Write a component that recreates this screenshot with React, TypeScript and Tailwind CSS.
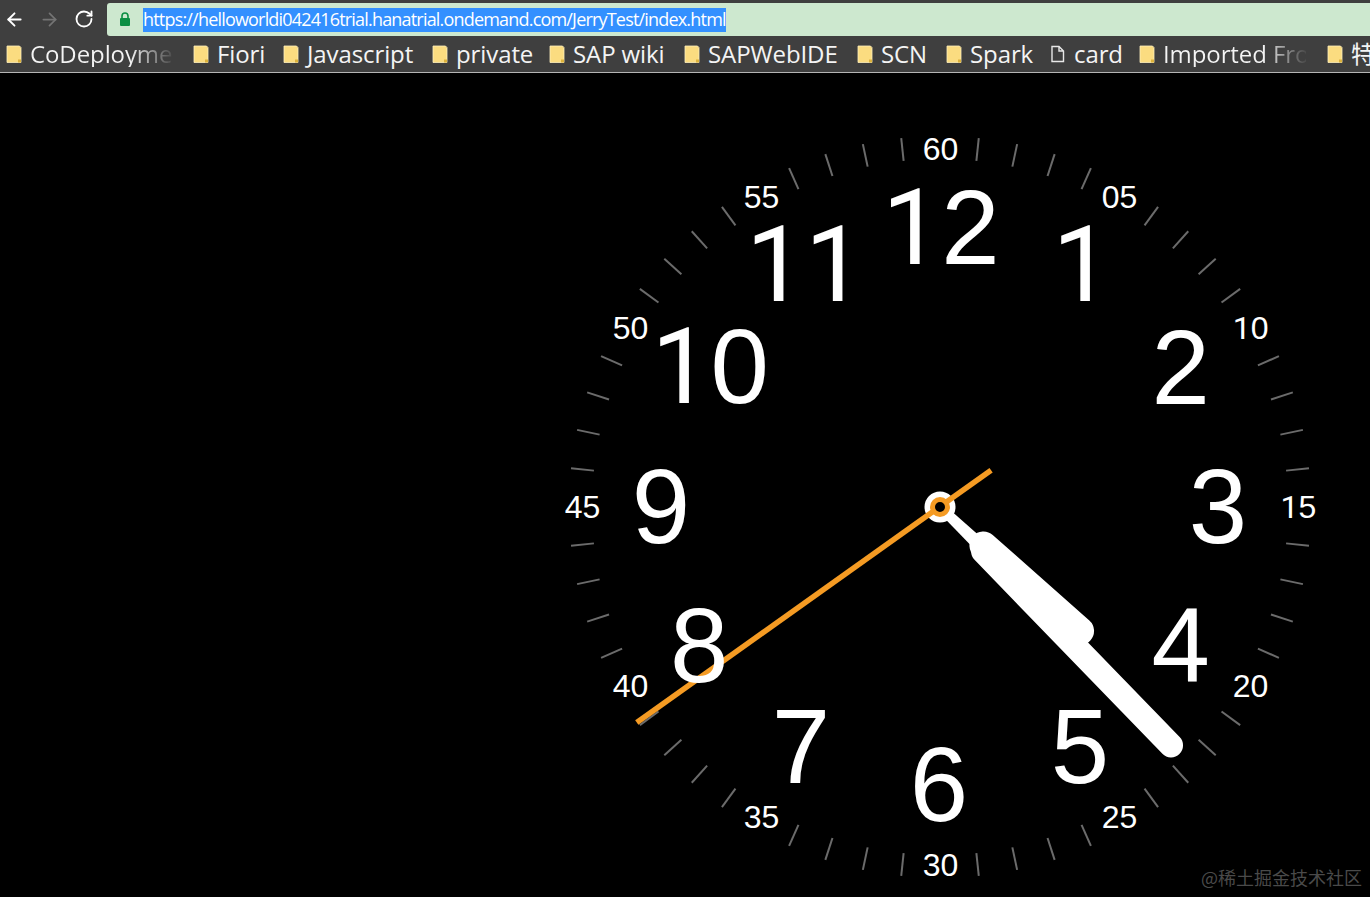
import React from 'react';
import { ArrowLeft, ArrowRight, RotateCw } from 'lucide-react';

const CX = 570 + 370;
const CY = 507 - 73;

const bookmarks = [
  { label: 'CoDeployme', width: 'w-[187px]', fade: true },
  { label: 'Fiori', width: 'w-[90px]' },
  { label: 'Javascript', width: 'w-[149px]' },
  { label: 'private', width: 'w-[117px]' },
  { label: 'SAP wiki', width: 'w-[135px]' },
  { label: 'SAPWebIDE', width: 'w-[173px]' },
  { label: 'SCN', width: 'w-[89px]' },
  { label: 'Spark', width: 'w-[104px]' },
  { label: 'card', width: 'w-[89px]', page: true },
  { label: 'Imported From', width: 'w-[188px]', fade: true },
  { label: '特', width: 'w-[40px]' },
];

const polar = (deg: number, r: number) => {
  const a = (deg * Math.PI) / 180;
  return { x: CX + r * Math.sin(a), y: CY - r * Math.cos(a) };
};

// the reference's "1" has no foot, Liberation's has one
const Digits = ({ value }: { value: string }) => (
  <>
    {value.split('').map((c, i) =>
      c === '1' ? (
        <span key={i} className="font-['Roboto',sans-serif]">
          1
        </span>
      ) : (
        <span key={i}>{c}</span>
      ),
    )}
  </>
);

const FolderIcon = () => (
  <svg width="16" height="19" viewBox="0 0 16 19" className="shrink-0">
    <path d="M1 1h12.500l1.500 1.500v15h-14z" fill="#fbdc80" stroke="#fff0bd" strokeWidth="0.800" />
    <path d="M12 17.500v-3h3v3z" fill="#dcb23c" />
  </svg>
);

const PageIcon = () => (
  <svg width="16" height="19" viewBox="0 0 16 19" className="shrink-0">
    <path d="M2 1.500h7l4.500 4.500v10.500h-11.500z M9 1.500v4.500h4.500" fill="none" stroke="#e8e8e8" strokeWidth="1.400" />
  </svg>
);

const LockIcon = () => (
  <svg width="12" height="15" viewBox="0 0 12 15">
    <path d="M3 6.500v-2.500a3 3 0 0 1 6 0v2.500" fill="none" stroke="#0b8f43" strokeWidth="1.600" />
    <rect x="1" y="6" width="10" height="8" rx="1" fill="#0b8f43" />
  </svg>
);

const ClockFace = () => {
  const ticks = Array.from({ length: 60 }, (_, i) => i).filter((i) => i % 5 !== 0);
  const h = polar(131.5, 187);
  const hs = polar(131.5, 58);
  const m = polar(135.9, 332);
  const ms = polar(135.9, 62);
  const s1 = polar(54.2, 63);
  const s2 = polar(234.6, 372);
  return (
    <svg width="1370" height="824" className="absolute left-0 top-0">
      {ticks.map((i) => {
        const a = polar(i * 6, 348);
        const b = polar(i * 6, 371);
        return <line key={i} x1={a.x} y1={a.y} x2={b.x} y2={b.y} stroke="#6b6b6b" strokeWidth="2" />;
      })}
      <line x1={CX} y1={CY} x2={hs.x} y2={hs.y} stroke="#fff" strokeWidth="9" />
      <line x1={CX} y1={CY} x2={ms.x} y2={ms.y} stroke="#fff" strokeWidth="9" />
      <line x1={hs.x} y1={hs.y} x2={h.x} y2={h.y} stroke="#fff" strokeWidth="28" strokeLinecap="round" />
      <line x1={ms.x} y1={ms.y} x2={m.x} y2={m.y} stroke="#fff" strokeWidth="24" strokeLinecap="round" />
      <circle cx={CX} cy={CY} r="15.500" fill="#fff" />
      <line x1={s1.x} y1={s1.y} x2={s2.x} y2={s2.y} stroke="#f59b23" strokeWidth="5.500" />
      <circle cx={CX} cy={CY} r="7.500" fill="#000" stroke="#f59b23" strokeWidth="5" />
    </svg>
  );
};

const App = () => {
  const hours = [
    { n: '12', dx: 1 },
    { n: '1', dx: 3 },
    { n: '2', dx: 0 },
    { n: '3', dx: 0 },
    { n: '4', dx: 0 },
    { n: '5', dx: 1 },
    { n: '6', dx: -1 },
    { n: '7', dx: 0 },
    { n: '8', dx: 0 },
    { n: '9', dx: -1 },
    { n: '10', dx: 11 },
    { n: '11', dx: 4 },
  ];
  const minutes = ['60', '05', '10', '15', '20', '25', '30', '35', '40', '45', '50', '55'];

  return (
    <div className="flex h-screen w-full flex-col overflow-hidden bg-black font-['Liberation_Sans',sans-serif]">
      {/* Browser chrome */}
      <div className="flex h-9 shrink-0 items-end bg-[#3f3f3f]">
        <div className="flex h-[33px] w-[107px] items-center pb-[1px] pl-[4px]">
          <ArrowLeft size={21} className="text-white" strokeWidth={2.2} />
          <ArrowRight size={21} className="ml-[14px] text-[#747474]" strokeWidth={2} />
          <RotateCw size={20} className="ml-[14px] text-white" strokeWidth={2.2} />
        </div>
        <div className="flex h-[33px] flex-1 items-center rounded-l-[3px] bg-[#cde8cf] pl-[12px]">
          <LockIcon />
          <span className="ml-[12px] flex h-6 w-[583px] items-center whitespace-nowrap bg-[#3390ff] font-['Open_Sans',sans-serif] text-[18px] tracking-[-0.81px] text-white">
            https://helloworldi042416trial.hanatrial.ondemand.com/JerryTest/index.html
          </span>
        </div>
      </div>
      <div className="flex h-[37px] shrink-0 items-center overflow-hidden border-b border-[#b5b5b5] bg-[#3f3f3f] pl-[6px] font-['Open_Sans','Noto_Sans_CJK_SC',sans-serif] text-[24px] leading-none text-[#f4f4f4]">
        {bookmarks.map((b) => (
          <div key={b.label} className={`flex shrink-0 items-center gap-[8px] ${b.width}`}>
            {b.page ? <PageIcon /> : <FolderIcon />}
            {b.fade ? (
              <span className="w-[143px] overflow-hidden whitespace-nowrap bg-gradient-to-r from-[#f4f4f4] from-[70%] to-[#4a4a4a] bg-clip-text pb-[1px] tracking-[-0.1px] text-transparent">
                {b.label}
              </span>
            ) : (
              <span className="whitespace-nowrap pb-[1px] tracking-[-0.1px]">{b.label}</span>
            )}
          </div>
        ))}
      </div>

      {/* Clock */}
      <div className="relative flex-1 bg-black text-white">
        <ClockFace />
        {hours.map((h, i) => {
          const p = polar(i * 30, 278);
          return (
            <span
              key={h.n}
              className="absolute -translate-x-1/2 -translate-y-1/2 text-[105px] leading-none"
              style={{ left: p.x + h.dx, top: p.y - 1.5 }}
            >
              <Digits value={h.n} />
            </span>
          );
        })}
        {minutes.map((n, i) => {
          const p = polar(i * 30, 358);
          return (
            <span
              key={n}
              className="absolute -translate-x-1/2 -translate-y-1/2 text-[32px] leading-none"
              style={{ left: p.x + 0.5, top: p.y }}
            >
              <Digits value={n} />
            </span>
          );
        })}
        <span className="absolute bottom-[11px] right-[8px] font-['Noto_Sans_CJK_SC',sans-serif] text-[18px] leading-none text-[#4a4a4a]">
          @稀土掘金技术社区
        </span>
      </div>
    </div>
  );
};

export default App;
